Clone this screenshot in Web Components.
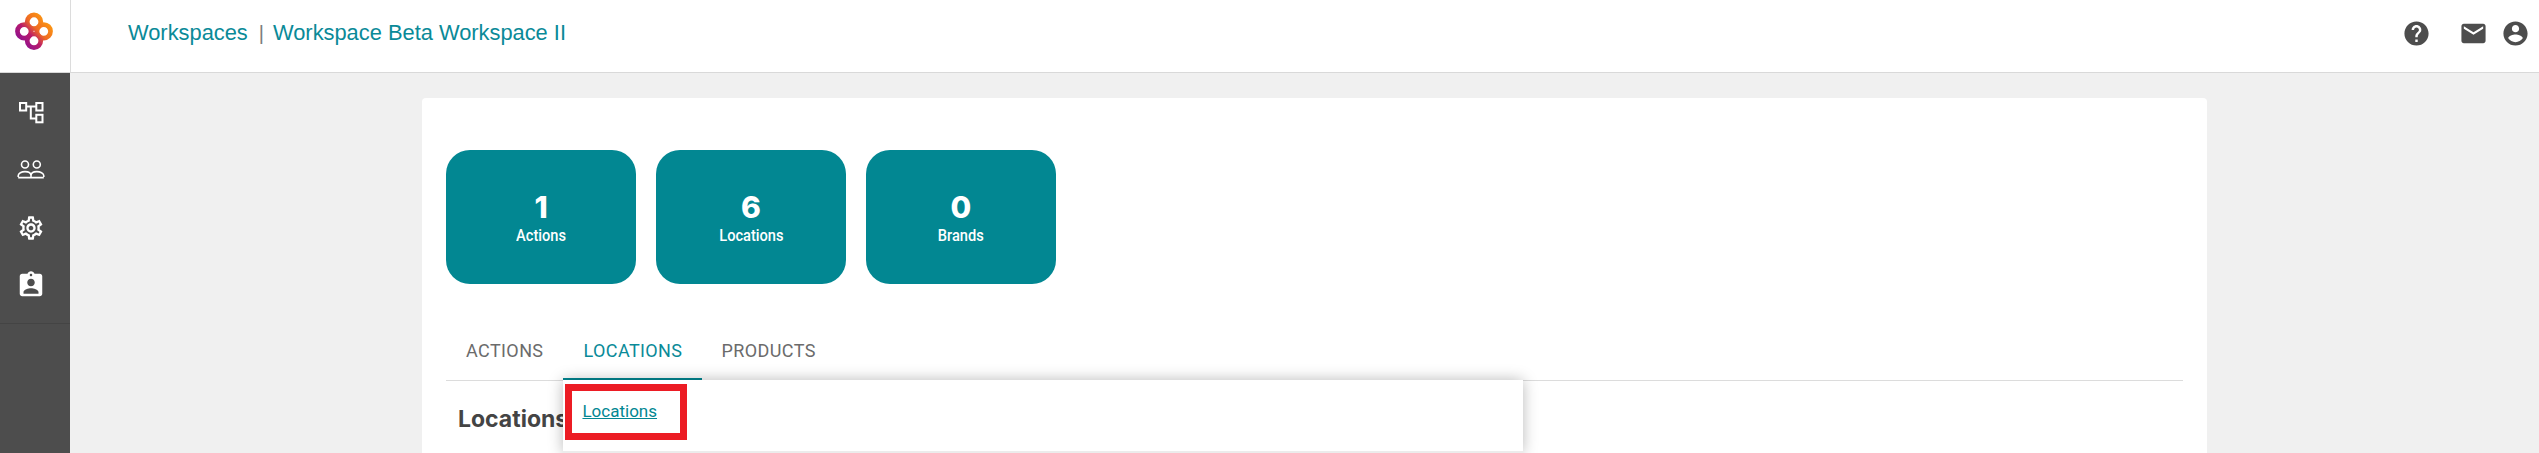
<html lang="en">
<head>
<style>
  html, body { margin: 0; height: 100%; overflow: hidden; background: #f0f0f0; }
  body { font-family: "Liberation Sans", sans-serif; }
  .stats { display: flex; gap: 20px; }
</style>
</head>
<body>
<workspace-app>
  <app-header slot="header">
    <a>Workspaces</a><i>|</i><a>Workspace Beta Workspace II</a>
  </app-header>
  <side-nav slot="nav"></side-nav>
  <workspace-card>
    <div class="stats">
      <stat-tile count="1">Actions</stat-tile>
      <stat-tile count="6">Locations</stat-tile>
      <stat-tile count="0">Brands</stat-tile>
    </div>
    <tab-bar></tab-bar>
    <locations-panel></locations-panel>
  </workspace-card>
</workspace-app>

<script type="module">
  class workspaceApp extends HTMLElement {
    constructor() {
      super();
      this.attachShadow({mode: "open"});
      this.shadowRoot.innerHTML = `
      <style>
        :host { display: grid; grid-template-columns: 70px 1fr; grid-template-rows: 73px 1fr; height: 453px; overflow: hidden; }
        ::slotted([slot="header"]) { grid-column: 1 / 3; }
        main { padding: 25px 0 0 352px; min-width: 0; }
      </style>
      <slot name="header"></slot>
      <slot name="nav"></slot>
      <main><slot></slot></main>
      `
    }
  }

  class appHeader extends HTMLElement {
    constructor() {
      super();
      this.attachShadow({mode: "open"});
      this.shadowRoot.innerHTML = `
      <style>
        :host { display: flex; align-items: stretch; background: #fff; border-bottom: 1px solid #d9d9d9; box-sizing: border-box; height: 73px; }
        .logo { width: 70px; border-right: 1px solid #dcdcdc; display: flex; justify-content: center; padding-top: 12px; }
        .logo svg { width: 38px; height: 38px; margin-left: -2px; }
        .crumbs { flex: 1; display: flex; align-items: center; padding: 0 0 6px 57px; font: 21.85px "Liberation Sans", sans-serif; color: #0a8a98; }
        ::slotted(i) { font-style: normal; font-size: 20px; color: #7d7d7d; margin: 0 9px 0 11px; }
        .icons { display: flex; align-items: center; padding: 0 9px 6px 0; }
        .icons svg { width: 29px; height: 29px; fill: #4d4d4d; }
        .icons svg + svg { margin-left: 28px; }
        .icons svg:last-child { margin-left: 13px; }
      </style>
      <div class="logo">
        <svg viewBox="0 0 37 37" fill="none" stroke="url(#ring)" stroke-width="4.6">
          <defs>
            <linearGradient id="ring" gradientUnits="userSpaceOnUse" x1="6" y1="30" x2="30" y2="8">
              <stop offset="0" stop-color="#90128f"/>
              <stop offset=".35" stop-color="#b81a6c"/>
              <stop offset=".62" stop-color="#ef6a24"/>
              <stop offset="1" stop-color="#fb9412"/>
            </linearGradient>
          </defs>
          <circle cx="18.5" cy="9.5" r="6.6"/>
          <circle cx="28" cy="18.8" r="6.6"/>
          <circle cx="9" cy="18.8" r="6.6"/>
          <circle cx="18.5" cy="28" r="6.6"/>
        </svg>
      </div>
      <div class="crumbs"><slot></slot></div>
      <div class="icons">
        <svg viewBox="0 0 24 24"><path d="M12 2C6.48 2 2 6.48 2 12s4.48 10 10 10 10-4.48 10-10S17.52 2 12 2zm1 17h-2v-2h2v2zm2.07-7.75l-.9.92C13.45 12.9 13 13.5 13 15h-2v-.5c0-1.1.45-2.1 1.17-2.83l1.24-1.26c.37-.36.59-.86.59-1.41 0-1.1-.9-2-2-2s-2 .9-2 2H8c0-2.21 1.79-4 4-4s4 1.79 4 4c0 .88-.36 1.68-.93 2.25z"/></svg>
        <svg viewBox="0 0 24 24"><path d="M20 4H4c-1.1 0-1.99.9-1.99 2L2 18c0 1.1.9 2 2 2h16c1.1 0 2-.9 2-2V6c0-1.1-.9-2-2-2zm0 4l-8 5-8-5V6l8 5 8-5v2z"/></svg>
        <svg viewBox="0 0 24 24"><path d="M12 2C6.48 2 2 6.48 2 12s4.48 10 10 10 10-4.48 10-10S17.52 2 12 2zm0 3c1.66 0 3 1.34 3 3s-1.34 3-3 3-3-1.34-3-3 1.34-3 3-3zm0 14.2c-2.5 0-4.71-1.28-6-3.22.03-1.99 4-3.08 6-3.08 1.99 0 5.97 1.09 6 3.08-1.29 1.94-3.5 3.22-6 3.22z"/></svg>
      </div>
      `
    }
  }

  class sideNav extends HTMLElement {
    constructor() {
      super();
      this.attachShadow({mode: "open"});
      this.shadowRoot.innerHTML = `
      <style>
        :host { display: block; background: #4d4d4d; }
        ul { list-style: none; margin: 0; padding: 10px 0 12px; border-bottom: 1px solid #444; }
        li { height: 57px; display: flex; align-items: center; justify-content: center; padding-right: 8px; }
        li:nth-child(n+3) svg { margin-top: 4px; }
        svg { display: block; }
      </style>
      <ul>
        <li><svg width="26" height="24" viewBox="0 0 26 24" fill="none" stroke="#fff" stroke-width="2">
          <rect x="2" y="3" width="6.2" height="7.5"/><rect x="18.3" y="3" width="6.2" height="7.5"/><rect x="18.3" y="14.8" width="6.2" height="7.5"/>
          <path d="M8.2 6.6h10.1M12.8 6.6v12h5.5"/>
        </svg></li>
        <li><svg width="28" height="20" viewBox="0 0 28 20" fill="none" stroke="#fff" stroke-width="1.6">
          <circle cx="8" cy="5.5" r="3.5"/><circle cx="19.8" cy="5.5" r="3.5"/>
          <path d="M1.2 18v-1.2c0-2.6 3.4-4.2 6.8-4.2s6 1.4 6 4v1.4M14 18v-1.4c0-2.6 2.4-4 5.8-4s7 1.6 7 4.2V18M1.2 18.6h25.6"/>
        </svg></li>
        <li><svg width="28" height="28" viewBox="0 0 24 24" fill="#fff"><path d="M19.43 12.98c.04-.32.07-.64.07-.98 0-.34-.03-.66-.07-.98l2.11-1.65c.19-.15.24-.42.12-.64l-2-3.46c-.09-.16-.26-.25-.44-.25-.06 0-.12.01-.17.03l-2.49 1c-.52-.4-1.08-.73-1.69-.98l-.38-2.65C14.46 2.18 14.25 2 14 2h-4c-.25 0-.46.18-.49.42l-.38 2.65c-.61.25-1.17.59-1.69.98l-2.49-1c-.06-.02-.12-.03-.18-.03-.17 0-.34.09-.43.25l-2 3.46c-.13.22-.07.49.12.64l2.11 1.65c-.04.32-.07.65-.07.98 0 .33.03.66.07.98l-2.11 1.65c-.19.15-.24.42-.12.64l2 3.46c.09.16.26.25.44.25.06 0 .12-.01.17-.03l2.49-1c.52.4 1.08.73 1.69.98l.38 2.65c.03.24.24.42.49.42h4c.25 0 .46-.18.49-.42l.38-2.65c.61-.25 1.17-.59 1.69-.98l2.49 1c.06.02.12.03.18.03.17 0 .34-.09.43-.25l2-3.46c.12-.22.07-.49-.12-.64l-2.11-1.65zm-1.98-1.71c.04.31.05.52.05.73 0 .21-.02.43-.05.73l-.14 1.13.89.7 1.08.84-.7 1.21-1.27-.51-1.04-.42-.9.68c-.43.32-.84.56-1.25.73l-1.06.43-.16 1.13-.2 1.35h-1.4l-.19-1.35-.16-1.13-1.06-.43c-.43-.18-.83-.41-1.23-.71l-.91-.7-1.06.43-1.27.51-.7-1.21 1.08-.84.89-.7-.14-1.13c-.03-.31-.05-.54-.05-.74s.02-.43.05-.73l.14-1.13-.89-.7-1.08-.84.7-1.21 1.27.51 1.04.42.9-.68c.43-.32.84-.56 1.25-.73l1.06-.43.16-1.13.2-1.35h1.39l.19 1.35.16 1.13 1.06.43c.43.18.83.41 1.23.71l.91.7 1.06-.43 1.27-.51.7 1.21-1.07.85-.89.7.14 1.13zM12 8c-2.21 0-4 1.79-4 4s1.79 4 4 4 4-1.79 4-4-1.79-4-4-4zm0 6c-1.1 0-2-.9-2-2s.9-2 2-2 2 .9 2 2-.9 2-2 2z"/></svg></li>
        <li><svg width="30" height="30" viewBox="0 0 24 24" fill="#fff"><path d="M19 3h-4.18C14.4 1.84 13.3 1 12 1c-1.3 0-2.4.84-2.82 2H5c-1.1 0-2 .9-2 2v14c0 1.1.9 2 2 2h14c1.1 0 2-.9 2-2V5c0-1.1-.9-2-2-2zm-7 0c.55 0 1 .45 1 1s-.45 1-1 1-1-.45-1-1 .45-1 1-1zm0 4c1.66 0 3 1.34 3 3s-1.34 3-3 3-3-1.34-3-3 1.34-3 3-3zm6 12H6v-1.4c0-2 4-3.1 6-3.1s6 1.1 6 3.1V19z"/></svg></li>
      </ul>
      `
    }
  }

  class workspaceCard extends HTMLElement {
    constructor() {
      super();
      this.attachShadow({mode: "open"});
      this.shadowRoot.innerHTML = `
      <style>
        :host { display: block; width: 1785px; height: 400px; box-sizing: border-box; padding: 52px 24px 0; background: #fff; border-radius: 4px 4px 0 0; }
      </style>
      <slot></slot>
      `
    }
  }

  class statTile extends HTMLElement {
    constructor() {
      super();
      this.attachShadow({mode: "open"});
      this.shadowRoot.innerHTML = `
      <style>
        :host { display: flex; flex-direction: column; align-items: center; justify-content: center; width: 190px; height: 134px; background: #028792; color: #fff; border-radius: 24px; padding-bottom: 1px; box-sizing: border-box; }
        b { font: 800 30px/36px Inter, sans-serif; }
        span { font: 500 17px/20px Roboto, sans-serif; transform: scaleX(.86); }
      </style>
      <b id="count"></b>
      <span><slot></slot></span>
      `
    }
    connectedCallback() {
      this.shadowRoot.getElementById("count").textContent = this.getAttribute("count");
    }
  }

  class tabBar extends HTMLElement {
    constructor() {
      super();
      this.attachShadow({mode: "open"});
      this.shadowRoot.innerHTML = `
      <style>
        :host { display: flex; position: relative; margin-top: 41px; height: 56px; box-sizing: border-box; border-bottom: 1px solid #dcdcdc; font: 400 18px Roboto, sans-serif; letter-spacing: .4px; color: #6b6b6b; }
        div { position: relative; padding: 0 20px; height: 55px; line-height: 51px; box-sizing: border-box; white-space: nowrap; }
        div:first-child { padding: 0 18px 0 19px; }
        div:last-child { padding-left: 19px; }
        .on { color: #0a8a98; z-index: 2; border-bottom: 2px solid #028792; }
        location-menu { position: absolute; left: 0; top: 55px; }
      </style>
      <div>ACTIONS</div>
      <div class="on">LOCATIONS<location-menu></location-menu></div>
      <div>PRODUCTS</div>
      `
    }
  }

  class locationMenu extends HTMLElement {
    constructor() {
      super();
      this.attachShadow({mode: "open"});
      this.shadowRoot.innerHTML = `
      <style>
        :host { display: block; width: 960px; height: 73px; box-sizing: border-box; padding: 4px 0 0 2px; background: #fff; border-bottom: 2px solid #ececec; box-shadow: 0 0 14px rgba(0,0,0,.28); }
        a { display: flex; align-items: center; box-sizing: border-box; width: 122px; height: 56px; padding: 0 0 2px 10px; border: 7px solid #ec1c24; font: 400 17px Roboto, sans-serif; letter-spacing: 0; color: #028792; text-decoration: underline; }
      </style>
      <a>Locations</a>
      `
    }
  }

  class locationsPanel extends HTMLElement {
    constructor() {
      super();
      this.attachShadow({mode: "open"});
      this.shadowRoot.innerHTML = `
      <style>
        :host { display: block; padding: 24px 0 0 12px; }
        h2 { margin: 0; font: 700 23px/28px Inter, sans-serif; color: #444; }
      </style>
      <h2>Locations</h2>
      `
    }
  }

  customElements.define("workspace-app", workspaceApp);
  customElements.define("app-header", appHeader);
  customElements.define("side-nav", sideNav);
  customElements.define("workspace-card", workspaceCard);
  customElements.define("stat-tile", statTile);
  customElements.define("tab-bar", tabBar);
  customElements.define("location-menu", locationMenu);
  customElements.define("locations-panel", locationsPanel);
</script>
</body>
</html>
